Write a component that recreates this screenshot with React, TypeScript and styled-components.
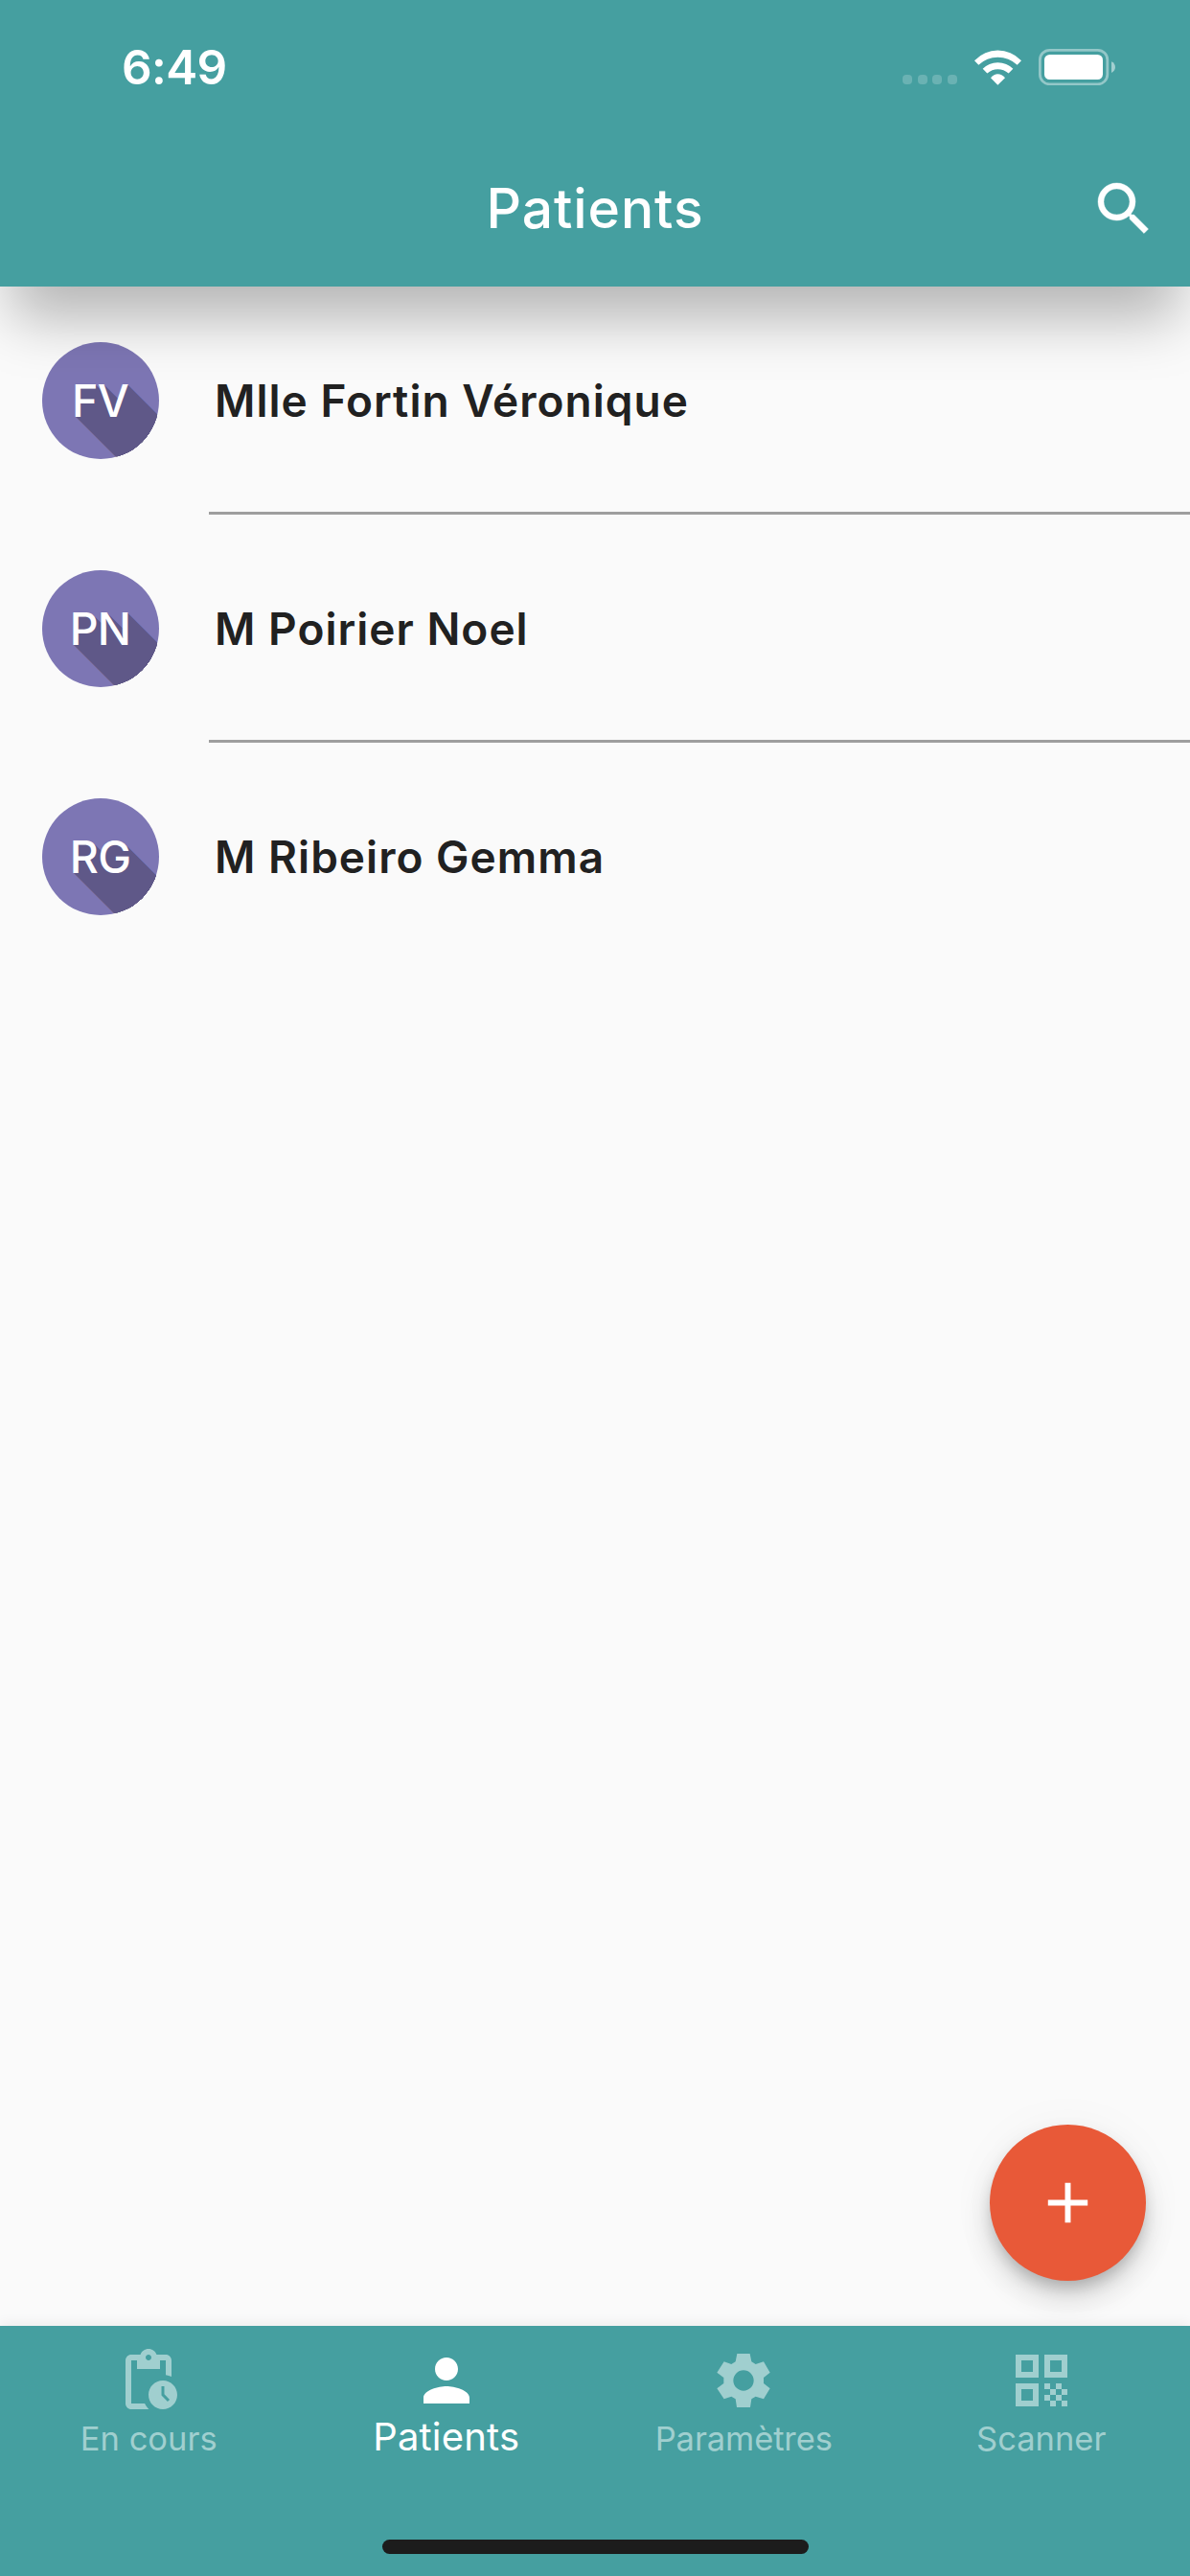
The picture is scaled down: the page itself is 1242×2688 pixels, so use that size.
import React from "react";
import styled, { createGlobalStyle } from "styled-components";
import { MdAdd, MdPendingActions, MdPerson, MdQrCode, MdSearch } from "react-icons/md";

const TEAL = "#459fa0";

const GlobalStyle = createGlobalStyle`
  * { box-sizing: border-box; }
  body { margin: 0; background: #fafafa; }
`;

const Screen = styled.div`
  position: relative;
  display: flex;
  flex-direction: column;
  width: 1242px;
  height: 2688px;
  overflow: hidden;
  background: #fafafa;
  font-family: Inter, "Liberation Sans", sans-serif;
  color: #212121;
`;

const Header = styled.header`
  position: relative;
  z-index: 1;
  flex: none;
  height: 299px;
  background: ${TEAL};
  color: #fff;
  box-shadow: 0 45px 57px -12px rgba(0, 0, 0, 0.28);
`;

const StatusBar = styled.div`
  display: flex;
  align-items: center;
  justify-content: space-between;
  height: 137px;
  padding: 3px 77px 0 127px;
`;

const Clock = styled.span`
  font-size: 49.5px;
  font-weight: 600;
  line-height: 60px;
  letter-spacing: -0.6px;
`;

const Indicators = styled.div`
  display: flex;
  align-items: center;
  gap: 18px;
`;

const Dots = styled.div`
  display: flex;
  gap: 5.6px;
  padding-top: 26px;
`;

const Dot = styled.i`
  width: 10px;
  height: 10px;
  border-radius: 4px;
  background: rgba(255, 255, 255, 0.2);
`;

const Toolbar = styled.div`
  display: grid;
  grid-template-columns: 1fr auto 1fr;
  align-items: center;
  height: 162px;
  padding: 0 33px;
`;

const Title = styled.h1`
  grid-column: 2;
  margin: 0;
  font-size: 57px;
  font-weight: 500;
  line-height: 72px;
  letter-spacing: 0.9px;
`;

const SearchButton = styled.button`
  justify-self: end;
  display: flex;
  padding: 0;
  border: 0;
  background: none;
  color: inherit;

  path:last-child {
    stroke: currentColor;
    stroke-width: 0.15px;
  }
`;

const PatientList = styled.ul`
  flex: 1;
  margin: 0;
  padding: 0;
  list-style: none;
`;

const PatientRow = styled.li`
  display: grid;
  grid-template-columns: 217.5px 1fr;
  height: 238px;
`;

const AvatarCell = styled.div`
  padding: 58px 0 0 43.5px;
`;

const Avatar = styled.div`
  display: flex;
  align-items: center;
  justify-content: center;
  width: 122px;
  height: 122px;
  border-radius: 50%;
  overflow: hidden;
  background: #7d76b4;
  color: #fff;
  font-size: 46.5px;
  font-weight: 500;
  line-height: 56px;
  letter-spacing: -0.8px;
  text-shadow: ${Array.from({ length: 110 }, (_, i) => `${i + 1}px ${i + 1}px 0 #5f5888`).join(", ")};
`;

const NameCell = styled.div<{ $divided: boolean }>`
  padding: 90px 0 0 6.5px;
  border-bottom: 3px solid ${(p) => (p.$divided ? "#9e9e9e" : "transparent")};
  font-size: 46px;
  font-weight: 600;
  line-height: 58px;
  letter-spacing: 1.02px;
  white-space: nowrap;
`;

const AddButton = styled.button`
  position: absolute;
  left: 1033px;
  top: 2217px;
  display: flex;
  align-items: center;
  justify-content: center;
  width: 163px;
  height: 163px;
  padding: 0;
  border: 0;
  border-radius: 50%;
  background: #e85938;
  color: #fff;
  box-shadow: 0 9px 15px -3px rgba(0, 0, 0, 0.2), 0 18px 30px rgba(0, 0, 0, 0.14), 0 3px 54px rgba(0, 0, 0, 0.04);
`;

const BottomBar = styled.nav`
  flex: none;
  display: flex;
  flex-direction: column;
  justify-content: space-between;
  align-items: center;
  height: 261.5px;
  padding-bottom: 23px;
  background: ${TEAL};
  box-shadow: 0 -3px 12px rgba(0, 0, 0, 0.06);
`;

const Tabs = styled.div`
  display: grid;
  grid-template-columns: repeat(4, 1fr);
  width: 100%;
`;

const Tab = styled.a<{ $active?: boolean }>`
  display: flex;
  flex-direction: column;
  align-items: center;
  padding-top: 21.5px;
  color: ${(p) => (p.$active ? "#fff" : "#a0cfcf")};
`;

const TabLabel = styled.span<{ $active?: boolean; $spacing: number }>`
  margin-top: ${(p) => (p.$active ? -2 : 0)}px;
  font-size: ${(p) => (p.$active ? 40 : 34.5)}px;
  line-height: 50px;
  letter-spacing: ${(p) => p.$spacing}px;
`;

const HomeIndicator = styled.div`
  width: 445px;
  height: 15px;
  border-radius: 7.5px;
  background: #1c1c1c;
`;

const WifiIcon = () => (
  <svg width="49" height="37" viewBox="348 95 147 110" fill="#fff">
    <path d="M348 128 Q380 96 421 96 Q463 96 495 128 L482 142 Q456 118 421 118 Q387 118 361 142Z" />
    <path d="M374 154 Q393 134 421 134 Q450 134 469 154 L455 168 Q440 155 421 155 Q403 155 388 168Z" />
    <path d="M399 182 Q409 170 421 170 Q434 170 444 182 L421 205Z" />
  </svg>
);

const BatteryIcon = () => (
  <svg width="81" height="38" viewBox="0 0 81 38">
    <rect x="1.4" y="1.4" width="70.4" height="35.4" rx="10" fill="none" stroke="#fff" strokeOpacity=".42" strokeWidth="2.8" />
    <rect x="6" y="6" width="61" height="26" rx="5.5" fill="#fff" />
    <path d="M76 13.2c5.3 2.2 5.3 9.6 0 11.8Z" fill="#fff" fillOpacity=".5" />
  </svg>
);

const GearIcon = () => (
  <svg width="72" height="72" viewBox="-108 -108 216 216" fill="currentColor">
    <path
      fillRule="evenodd"
      d="M-20-84H20L25-59L38-51L63-59L83-25L63-9V9L83 25L63 58L38 50L25 58L21 84H-21L-25 58L-38 50L-61 58L-83 25L-62 9V-9L-83-25L-61-59L-38-51L-25-59ZM0-32A32 32 0 1 0 0 32A32 32 0 1 0 0-32Z"
    />
  </svg>
);

const patients = [
  { initials: "FV", name: "Mlle Fortin Véronique" },
  { initials: "PN", name: "M Poirier Noel" },
  { initials: "RG", name: "M Ribeiro Gemma" },
];

const tabs = [
  { label: "En cours", icon: <MdPendingActions size={72} />, spacing: 0 },
  { label: "Patients", icon: <MdPerson size={72} />, active: true, spacing: 0.2 },
  { label: "Paramètres", icon: <GearIcon />, spacing: -0.1 },
  { label: "Scanner", icon: <MdQrCode size={72} />, spacing: 0 },
];

export default function App() {
  return (
    <Screen>
      <GlobalStyle />
      <Header>
        <StatusBar>
          <Clock>6:49</Clock>
          <Indicators>
            <Dots>
              <Dot />
              <Dot />
              <Dot />
              <Dot />
            </Dots>
            <WifiIcon />
            <BatteryIcon />
          </Indicators>
        </StatusBar>
        <Toolbar>
          <Title>Patients</Title>
          <SearchButton aria-label="Rechercher">
            <MdSearch size={72} />
          </SearchButton>
        </Toolbar>
      </Header>
      <PatientList>
        {patients.map((p, i) => (
          <PatientRow key={p.name}>
            <AvatarCell>
              <Avatar>{p.initials}</Avatar>
            </AvatarCell>
            <NameCell $divided={i < patients.length - 1}>{p.name}</NameCell>
          </PatientRow>
        ))}
      </PatientList>
      <BottomBar>
        <Tabs>
          {tabs.map((t) => (
            <Tab key={t.label} $active={t.active}>
              {t.icon}
              <TabLabel $active={t.active} $spacing={t.spacing}>
                {t.label}
              </TabLabel>
            </Tab>
          ))}
        </Tabs>
        <HomeIndicator />
      </BottomBar>
      <AddButton aria-label="Ajouter">
        <MdAdd size={71} />
      </AddButton>
    </Screen>
  );
}
